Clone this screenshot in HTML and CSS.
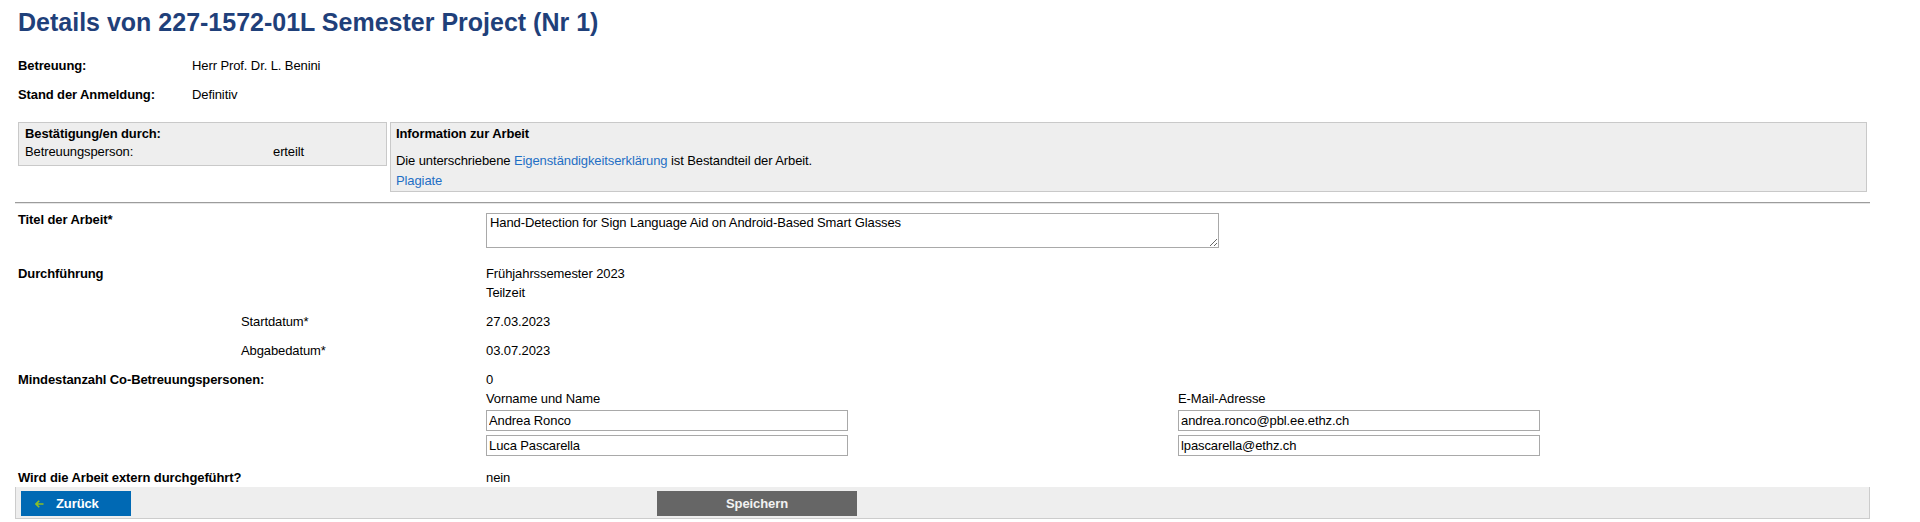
FILE: index.html
```html
<!DOCTYPE html>
<html lang="de">
<head>
<meta charset="utf-8">
<title>Details von 227-1572-01L Semester Project (Nr 1)</title>
<link rel="stylesheet" href="styles.css">
</head>
<body>
<div class="page">
  <h1 class="title">Details von 227-1572-01L Semester Project (Nr 1)</h1>

  <div class="summary">
    <div class="summary-label">Betreuung:</div>
    <div class="summary-value">Herr Prof. Dr. L. Benini</div>
    <div class="summary-label">Stand der Anmeldung:</div>
    <div class="summary-value">Definitiv</div>
  </div>

  <div class="boxes">
    <div class="box box-confirm">
      <div class="box-title">Bestätigung/en durch:</div>
      <div class="confirm-row"><span>Betreuungsperson:</span><span>erteilt</span></div>
    </div>
    <div class="box box-info">
      <div class="box-title">Information zur Arbeit</div>
      <div class="info-text first">Die unterschriebene <a class="link" href="#">Eigenständigkeitserklärung</a> ist Bestandteil der Arbeit.</div>
      <div class="info-text"><a class="link" href="#">Plagiate</a></div>
    </div>
  </div>

  <div class="divider"></div>

  <div class="form">
    <div class="form-row row-title">
      <div class="form-label">Titel der Arbeit*</div>
      <div class="form-value"><textarea class="title-input">Hand-Detection for Sign Language Aid on Android-Based Smart Glasses</textarea></div>
    </div>

    <div class="form-row">
      <div class="form-label">Durchführung</div>
      <div class="form-value">
        <div>Frühjahrssemester 2023</div>
        <div>Teilzeit</div>
      </div>
    </div>

    <div class="form-row">
      <div class="form-sublabel">Startdatum*</div>
      <div class="form-value">27.03.2023</div>
    </div>

    <div class="form-row">
      <div class="form-sublabel">Abgabedatum*</div>
      <div class="form-value">03.07.2023</div>
    </div>

    <div class="form-row">
      <div class="form-label">Mindestanzahl Co-Betreuungspersonen:</div>
      <div class="form-value">
        <div>0</div>
        <div class="co-grid">
          <div>Vorname und Name</div>
          <div>E-Mail-Adresse</div>
          <input class="text-input" type="text" value="Andrea Ronco">
          <input class="text-input" type="text" value="andrea.ronco@pbl.ee.ethz.ch">
          <input class="text-input" type="text" value="Luca Pascarella">
          <input class="text-input" type="text" value="lpascarella@ethz.ch">
        </div>
      </div>
    </div>

    <div class="form-row row-last">
      <div class="form-label">Wird die Arbeit extern durchgeführt?</div>
      <div class="form-value">nein</div>
    </div>
  </div>

  <div class="actions">
    <button class="btn btn-back" type="button">
      <svg class="back-arrow" width="9" height="8" viewBox="0 0 9 8" aria-hidden="true">
        <path d="M1 4 H8.5 M4.2 0.8 L1 4 L4.2 7.2" fill="none" stroke="#8cbf26" stroke-width="1.6"/>
      </svg>
      <span>Zurück</span>
    </button>
    <button class="btn btn-save" type="button">Speichern</button>
  </div>
</div>
</body>
</html>
```

FILE: styles.css
```css
* {
  box-sizing: border-box;
}

body {
  margin: 0;
  background: #fff;
  color: #000;
  font-family: "Liberation Sans", Arial, sans-serif;
  font-size: 13px;
  line-height: 16px;
  letter-spacing: -0.1px;
}

.page {
  width: 1870px;
  padding: 7px 0 0 15px;
}

.title {
  margin: 0 0 0 3px;
  font-size: 25px;
  line-height: 30px;
  font-weight: bold;
  color: #1f407a;
  letter-spacing: 0;
}

/* summary */
.summary {
  display: grid;
  grid-template-columns: 174px 1fr;
  row-gap: 13px;
  margin: 21px 0 0 3px;
}

.summary-label {
  font-weight: bold;
}

/* boxes */
.boxes {
  display: flex;
  align-items: flex-start;
  gap: 3px;
  margin: 19px 3px 0 3px;
}

.box {
  background: #eeeeee;
  border: 1px solid #c9c9c9;
}

.box-confirm {
  width: 369px;
  padding: 2px 6px 4px 6px;
  line-height: 18px;
}

.box-info {
  flex: 1;
  padding: 2px 5px 0 5px;
}

.box-title {
  font-weight: bold;
  line-height: 18px;
}

.confirm-row {
  display: grid;
  grid-template-columns: 248px auto;
}

.info-text {
  line-height: 20px;
}

.info-text.first {
  margin-top: 8px;
}

.link {
  color: #1f6fc5;
  text-decoration: none;
}

/* divider */
.divider {
  margin-top: 10px;
  border-top: 1px solid #9c9c9c;
  border-bottom: 1px solid #e6e6e6;
}

/* form */
.form {
  padding-left: 3px;
}

.form-row {
  display: grid;
  grid-template-columns: 223px 245px 1fr;
  padding: 5px 0;
  line-height: 19px;
}

.form-row.row-title {
  padding: 6px 0 11px;
}

.form-row.row-last {
  padding-bottom: 0;
}

.form-label {
  grid-column: 1 / 3;
  font-weight: bold;
}

.form-sublabel {
  grid-column: 2 / 3;
}

.form-value {
  grid-column: 3 / 4;
}

.title-input {
  display: block;
  margin-top: 3px;
  width: 733px;
  height: 35px;
  padding: 1px 3px;
  border: 1px solid #a9a9a9;
  border-radius: 0;
  font-family: "Liberation Sans", Arial, sans-serif;
  font-size: 13px;
  line-height: 16px;
  letter-spacing: -0.1px;
  color: #000;
  resize: both;
}

.co-grid {
  display: grid;
  grid-template-columns: 692px 362px;
  row-gap: 4px;
  margin-bottom: 2px;
}

.co-grid > div {
  margin-bottom: -2px;
}

.text-input {
  display: block;
  width: 362px;
  height: 21px;
  padding: 0 2px;
  border: 1px solid #a9a9a9;
  border-radius: 0;
  font-family: "Liberation Sans", Arial, sans-serif;
  font-size: 13px;
  letter-spacing: -0.1px;
  color: #000;
  background: #fff;
}

/* action bar */
.actions {
  display: flex;
  align-items: center;
  height: 32px;
  padding: 4px 5px 2px;
  background: #eeeeee;
  border: 1px solid #cccccc;
  border-top: none;
}

.btn {
  height: 25px;
  border: none;
  border-radius: 0;
  font-family: "Liberation Sans", Arial, sans-serif;
  font-size: 13px;
  font-weight: bold;
  letter-spacing: -0.1px;
  color: #fff;
  cursor: pointer;
}

.btn-back {
  display: flex;
  align-items: center;
  width: 110px;
  padding: 0 0 0 14px;
  background: #0069b4;
}

.back-arrow {
  margin-right: 12px;
}

.btn-save {
  width: 200px;
  margin-left: 526px;
  background: #666666;
  color: #f2f2f2;
}
```
